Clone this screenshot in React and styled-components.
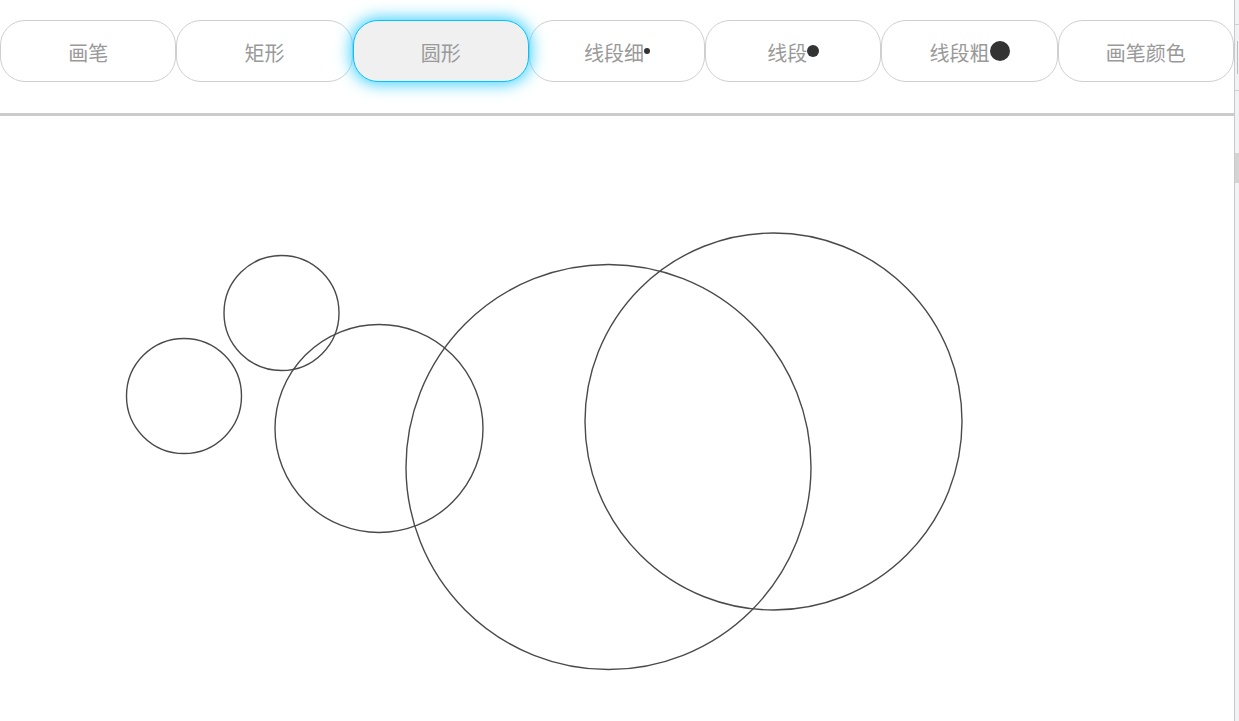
import React from "react";
import styled, { createGlobalStyle, css } from "styled-components";

const Global = createGlobalStyle`
  html, body { margin: 0; padding: 0; background: #fff; overflow: hidden; }
  body { font-family: "Noto Sans CJK SC", "Noto Sans", sans-serif; }
`;

const Page = styled.div`
  display: flex;
  width: 1239px;
  height: 721px;
`;

const Main = styled.div`
  flex: 0 0 1234px;
  display: flex;
  flex-direction: column;
`;

const Toolbar = styled.div`
  display: flex;
  padding: 20px 0 31px;
`;

const ToolButton = styled.button`
  flex: 1 1 0;
  min-width: 0;
  height: 62px;
  box-sizing: border-box;
  border: 1px solid #cfcfcf;
  border-radius: 25px;
  background: #fff;
  color: #999;
  font-family: "Noto Sans CJK SC", "Noto Sans", sans-serif;
  font-size: 20px;
  display: flex;
  align-items: center;
  justify-content: center;
  padding: 3px 0 0;
  cursor: pointer;
  ${(p) =>
    p.$active &&
    css`
      background: #f0f0f0;
      border-color: #00c3ff;
      box-shadow: 0 0 16px 2px #3ccfff;
      position: relative;
      z-index: 1;
    `}
`;

const Dot = styled.span`
  display: inline-block;
  width: ${(p) => p.$size}px;
  height: ${(p) => p.$size}px;
  border-radius: 50%;
  background: #333;
  margin-top: -3px;
`;

const Canvas = styled.div`
  flex: 1;
  border-top: 3px solid #cccccc;
`;

const Strip = styled.div`
  flex: 0 0 5px;
  box-sizing: border-box;
  border-left: 1px solid #c9c9c9;
  background: #f1f2f4;
  display: flex;
  flex-direction: column;
`;

const StripCell = styled.div`
  height: ${(p) => p.$h}px;
  border-bottom: ${(p) => (p.$line ? "1px solid #cfcfcf" : "none")};
  box-sizing: border-box;
  display: flex;
  justify-content: flex-end;
  align-items: center;
`;

const StripMark = styled.div`
  width: 1px;
  height: ${(p) => p.$h}px;
  background: #bdbdbd;
  margin-right: 1px;
`;

const StripThumb = styled.div`
  height: 30px;
  background: #d4d4d4;
  margin-top: ${(p) => p.$top}px;
`;

const tools = [
  { label: "画笔" },
  { label: "矩形" },
  { label: "圆形", active: true },
  { label: "线段细", dot: 6 },
  { label: "线段", dot: 12 },
  { label: "线段粗", dot: 20 },
  { label: "画笔颜色" },
];

const circles = [
  { cx: 184, cy: 280, r: 57.5 },
  { cx: 281.5, cy: 197, r: 57.5 },
  { cx: 379, cy: 312.5, r: 104 },
  { cx: 608.5, cy: 351, r: 202.5 },
  { cx: 773.5, cy: 305.5, r: 188.5 },
];

export default function App() {
  return (
    <>
      <Global />
      <Page>
        <Main>
          <Toolbar>
            {tools.map((t) => (
              <ToolButton key={t.label} $active={t.active}>
                {t.label}
                {t.dot ? <Dot $size={t.dot} /> : null}
              </ToolButton>
            ))}
          </Toolbar>
          <Canvas>
            <svg width="1234" height="605" viewBox="0 0 1234 605">
              {circles.map((c, i) => (
                <circle
                  key={i}
                  cx={c.cx}
                  cy={c.cy}
                  r={c.r}
                  fill="none"
                  stroke="#4a4a4a"
                  strokeWidth="1.4"
                />
              ))}
            </svg>
          </Canvas>
        </Main>
        <Strip>
          <StripCell $h={25} $line />
          <StripCell $h={66} $line>
            <StripMark $h={33} />
          </StripCell>
          <StripThumb $top={62} />
        </Strip>
      </Page>
    </>
  );
}
